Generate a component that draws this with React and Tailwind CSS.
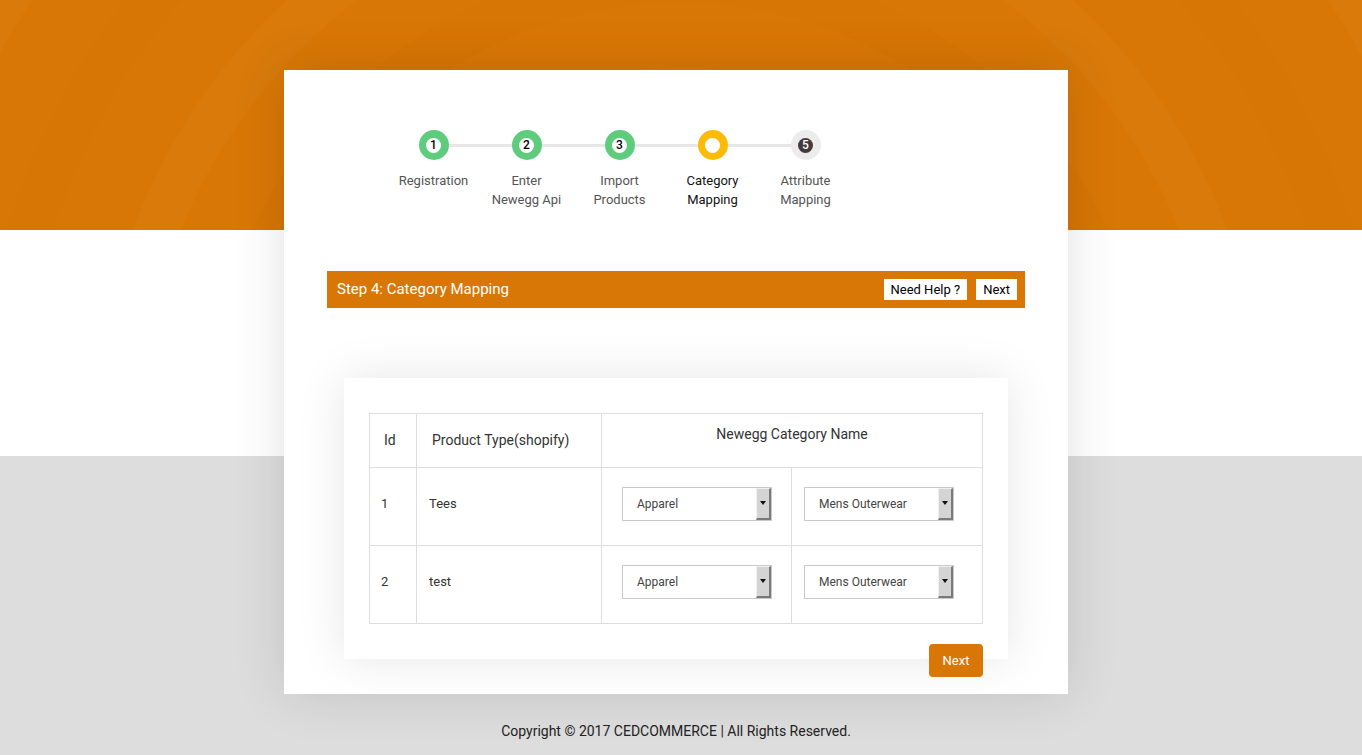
import React from "react";

const steps = [
  { n: "1", label: ["Registration"], state: "done" },
  { n: "2", label: ["Enter", "Newegg Api"], state: "done" },
  { n: "3", label: ["Import", "Products"], state: "done" },
  { n: "4", label: ["Category", "Mapping"], state: "active" },
  { n: "5", label: ["Attribute", "Mapping"], state: "todo" },
];

function StepCircle({ n, state }) {
  if (state === "done") {
    return (
      <div className="w-[30px] h-[30px] rounded-full bg-[#5fcb7c] flex items-center justify-center">
        <div className="w-[15px] h-[15px] rounded-full bg-white flex items-center justify-center text-[12px] leading-none font-medium text-black">
          {n}
        </div>
      </div>
    );
  }
  if (state === "active") {
    return (
      <div className="w-[30px] h-[30px] rounded-full bg-[#fbbb08] flex items-center justify-center">
        <div className="w-[15px] h-[15px] rounded-full bg-white" />
      </div>
    );
  }
  return (
    <div className="w-[30px] h-[30px] rounded-full bg-[#ececec] flex items-center justify-center">
      <div className="w-[15px] h-[15px] rounded-full bg-[#463c37] flex items-center justify-center text-[12px] leading-none font-medium text-white">
        {n}
      </div>
    </div>
  );
}

function FakeSelect({ value }) {
  return (
    <div className="w-[150px] h-[34px] border border-[#c9c9c9] bg-white flex items-stretch">
      <div className="flex-1 flex items-center pl-[14px] text-[12px] text-[#444]">{value}</div>
      <div className="w-[15px] bg-[#d4d4d4] border-l border-t border-l-[#f0f0f0] border-t-[#f0f0f0] border-r-2 border-b-2 border-r-[#7a7a7a] border-b-[#7a7a7a] flex items-center justify-center">
        <svg width="6" height="4" viewBox="0 0 6 4">
          <path d="M0 0 L6 0 L3 4 Z" fill="#111" />
        </svg>
      </div>
    </div>
  );
}

export default function App() {
  const rows = [
    { id: "1", type: "Tees" },
    { id: "2", type: "test" },
  ];
  return (
    <div
      className="relative min-h-[755px] w-full overflow-hidden bg-[linear-gradient(to_bottom,#d97706_0px,#d97706_230px,#ffffff_230px,#ffffff_456px,#dddddd_456px)]"
      style={{ fontFamily: "Roboto, 'Liberation Sans', sans-serif" }}
    >
      <svg
        className="absolute left-0 top-0 pointer-events-none"
        width="1362"
        height="230"
        viewBox="0 0 1362 230"
      >
        {[140, 240, 340, 450, 560, 680, 800].map((r, i) => (
          <circle
            key={r}
            cx="680"
            cy="430"
            r={r}
            fill="none"
            stroke={i % 2 === 0 ? "#ffffff" : "#b85f00"}
            strokeOpacity={i % 2 === 0 ? 0.025 : 0.035}
            strokeWidth="45"
          />
        ))}
      </svg>

      <div className="relative w-[1352px] flex flex-col items-center">
        <div className="mt-[70px] w-[784px] h-[624px] bg-white shadow-[0_0_50px_rgba(0,0,0,0.12)] flex flex-col">
          {/* stepper */}
          <div className="relative mt-[60px] ml-[103px] self-start flex">
            <div className="absolute left-[47px] right-[47px] top-[14px] h-[3px] bg-[#e7e7e7]" />
            {steps.map((s) => (
              <div key={s.n} className="relative w-[93px] flex flex-col items-center">
                <StepCircle n={s.n} state={s.state} />
                <div
                  className={
                    "mt-[11px] text-[13px] leading-[19px] text-center " +
                    (s.state === "active" ? "text-[#111]" : "text-[#555]")
                  }
                >
                  {s.label.map((l) => (
                    <div key={l}>{l}</div>
                  ))}
                </div>
              </div>
            ))}
          </div>

          {/* step bar */}
          <div className="mx-[43px] mt-[62px] h-[37px] bg-[#d97706] flex items-center justify-between pl-[10px] pr-[8px]">
            <span className="text-white text-[15px]">Step 4: Category Mapping</span>
            <div className="flex gap-[9px]">
              <button className="h-[21px] px-[7px] bg-white text-[13px] text-black leading-none">
                Need Help ?
              </button>
              <button className="h-[21px] px-[7px] bg-white text-[13px] text-black leading-none">
                Next
              </button>
            </div>
          </div>

          {/* inner card */}
          <div className="mx-[60px] mt-[70px] h-[281px] bg-white shadow-[0_0_45px_rgba(0,0,0,0.10)] px-[25px] pt-[35px]">
            <table className="w-[614px] border-collapse text-[#333]">
              <thead>
                <tr className="h-[54px]">
                  <th className="w-[47px] border border-[#dedede] font-normal text-[14px] text-left pl-[14px]">Id</th>
                  <th className="w-[185px] border border-[#dedede] font-normal text-[14px] text-left pl-[15px]">
                    Product Type(shopify)
                  </th>
                  <th
                    colSpan={2}
                    className="border border-[#dedede] font-normal text-[14px] text-center align-top pt-[10px] leading-[20px]"
                  >
                    Newegg Category Name
                  </th>
                </tr>
              </thead>
              <tbody>
                {rows.map((r) => (
                  <tr key={r.id} className="h-[78px]">
                    <td className="border border-[#dedede] text-[13px] pl-[11px] pb-[6px]">{r.id}</td>
                    <td className="border border-[#dedede] text-[13px] pl-[12px] pb-[6px]">{r.type}</td>
                    <td className="w-[190px] border border-[#dedede] pl-[20px] pb-[6px]">
                      <FakeSelect value="Apparel" />
                    </td>
                    <td className="border border-[#dedede] pl-[12px] pb-[6px]">
                      <FakeSelect value="Mens Outerwear" />
                    </td>
                  </tr>
                ))}
              </tbody>
            </table>
            <div className="flex justify-end mt-[20px]">
              <button className="h-[33px] w-[54px] rounded-[4px] bg-[#d97706] text-white text-[13px]">
                Next
              </button>
            </div>
          </div>
        </div>

        <div className="mt-[28px] text-[14px] leading-[18px] text-[#222]">
          Copyright © 2017 CEDCOMMERCE | All Rights Reserved.
        </div>
      </div>
    </div>
  );
}
